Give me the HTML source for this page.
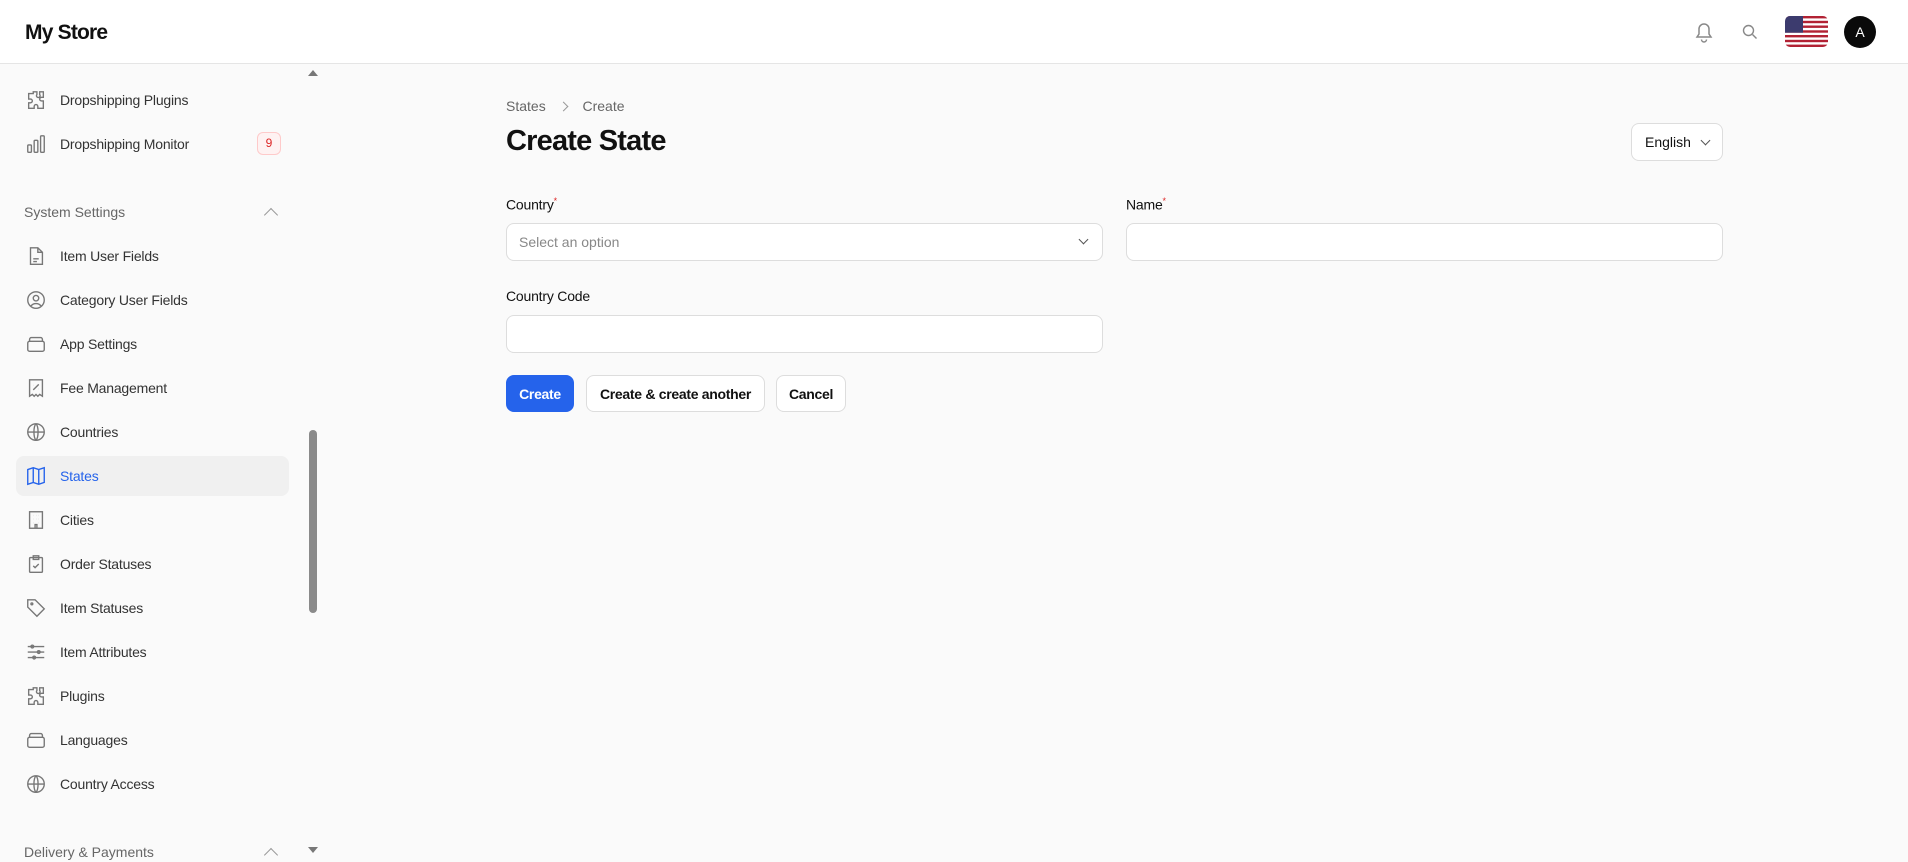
<!DOCTYPE html>
<html><head><meta charset="utf-8"><style>
*{box-sizing:border-box;margin:0;padding:0}
body{width:1908px;height:860px;overflow:hidden;background:#fafafa;font-family:"Liberation Sans",sans-serif;color:#111;position:relative}
.hdr{position:absolute;left:0;top:0;width:1908px;height:64px;background:#fff;border-bottom:1px solid #e5e5e5}
.logo{position:absolute;left:25px;top:21px;font-size:21px;font-weight:bold;letter-spacing:-0.8px}
.side{position:absolute;left:0;top:64px;width:305px;height:796px;background:#fafafa}
.track{position:absolute;left:305px;top:64px;width:15px;height:796px;background:#fafafa}
.thumb{position:absolute;left:309px;top:430px;width:8px;height:183px;background:#8a8a8a;border-radius:4px}
.item{position:absolute;left:16px;width:273px;height:40px;display:flex;align-items:center;font-size:14px;color:#333;border-radius:8px;letter-spacing:-0.2px}
.item svg{margin-left:9px;margin-right:13px;width:22px;height:22px;fill:none;stroke:#777;stroke-width:1.5}
.item.act{background:#f0f0f0;color:#2563eb}
.item.act svg{stroke:#2563eb}
.sec{position:absolute;left:24px;font-size:14px;color:#666}
.caret{position:absolute;left:266px;width:10px;height:10px;border-left:1.5px solid #999;border-top:1.5px solid #999;transform:rotate(45deg)}
.badge{position:absolute;left:257px;top:132px;width:24px;height:23px;border:1px solid #fecaca;background:#fef2f2;border-radius:6px;color:#dc2626;font-size:12px;text-align:center;line-height:21px}
.lbl{position:absolute;font-size:14px;color:#111;letter-spacing:-0.2px}
.lbl sup{color:#dc2626;font-size:9px}
.inp{position:absolute;height:38px;background:#fff;border:1px solid #ddd;border-radius:8px}
.btn{position:absolute;top:375px;height:37px;border-radius:8px;font-size:14px;font-weight:bold;display:flex;align-items:center;justify-content:center;background:#fff;border:1px solid #ddd;letter-spacing:-0.3px}
</style></head><body>
<div class="hdr"><div class="logo">My Store</div>
<svg style="position:absolute;left:1693px;top:20px" width="22" height="24" viewBox="0 0 22 24" fill="none" stroke="#888" stroke-width="1.5"><path d="M4 17h14l-2-3V9a5 5 0 0 0-10 0v5z"/><path d="M8.5 19.5a2.5 2.5 0 0 0 5 0"/></svg>
<svg style="position:absolute;left:1742px;top:24px" width="16" height="16" viewBox="0 0 16 16" fill="none" stroke="#888" stroke-width="1.4"><circle cx="6.5" cy="6.5" r="5"/><path d="M10.5 10.5l4 4"/></svg>
<svg style="position:absolute;left:1785px;top:16px;border-radius:5px" width="43" height="31" viewBox="0 0 43 31"><rect width="43" height="31" fill="#fff"/><g fill="#b22234"><rect y="0" width="43" height="2.4"/><rect y="4.8" width="43" height="2.4"/><rect y="9.5" width="43" height="2.4"/><rect y="14.3" width="43" height="2.4"/><rect y="19" width="43" height="2.4"/><rect y="23.8" width="43" height="2.4"/><rect y="28.6" width="43" height="2.4"/></g><rect width="18" height="16.7" fill="#3c3b6e"/></svg>
<div style="position:absolute;left:1844px;top:16px;width:32px;height:32px;border-radius:50%;background:#0a0a0a;color:#fff;font-size:14px;text-align:center;line-height:32px">A</div>
</div>
<div class="side"></div>
<div class="track"></div><div class="thumb"></div>
<div style="position:absolute;left:308px;top:70px;border-left:5px solid transparent;border-right:5px solid transparent;border-bottom:6px solid #777"></div>
<div style="position:absolute;left:308px;top:847px;border-left:5px solid transparent;border-right:5px solid transparent;border-top:6px solid #777"></div>

<div class="item" style="top:80px"><svg viewBox="0 0 24 24"><path d="M9 3h4v3a2 2 0 1 0 3 0V3h4v6h-2a2 2 0 1 0 0 4h2v8h-6v-2a2 2 0 1 0-4 0v2H4v-6h2a2 2 0 1 0 0-4H4V5h5z"/></svg>Dropshipping Plugins</div>
<div class="item" style="top:124px"><svg viewBox="0 0 24 24"><rect x="3" y="13" width="4" height="8" rx="1"/><rect x="10" y="8" width="4" height="13" rx="1"/><rect x="17" y="3" width="4" height="18" rx="1"/></svg>Dropshipping Monitor</div>
<div class="badge">9</div>
<div class="sec" style="top:204px">System Settings</div><div class="caret" style="top:210px"></div>
<div class="item" style="top:236px"><svg viewBox="0 0 24 24"><path d="M6 3h8l5 5v13H6z"/><path d="M14 3v5h5M9 15h6M9 18h4"/></svg>Item User Fields</div>
<div class="item" style="top:280px"><svg viewBox="0 0 24 24"><circle cx="12" cy="12" r="9"/><circle cx="12" cy="10" r="3"/><path d="M6.5 18.5a7 7 0 0 1 11 0"/></svg>Category User Fields</div>
<div class="item" style="top:324px"><svg viewBox="0 0 24 24"><rect x="3" y="9" width="18" height="11" rx="2"/><path d="M5 9V7a2 2 0 0 1 2-2h10a2 2 0 0 1 2 2v2"/></svg>App Settings</div>
<div class="item" style="top:368px"><svg viewBox="0 0 24 24"><path d="M5 3h14v18l-3-2-2 2-2-2-2 2-2-2-3 2z"/><path d="M9 14l6-6M9 9h.1M15 13h.1"/></svg>Fee Management</div>
<div class="item" style="top:412px"><svg viewBox="0 0 24 24"><circle cx="12" cy="12" r="9"/><path d="M3 12h18M12 3c3 3 3 15 0 18M12 3c-3 3-3 15 0 18"/></svg>Countries</div>
<div class="item act" style="top:456px"><svg viewBox="0 0 24 24"><path d="M3 5l6-2 6 2 6-2v16l-6 2-6-2-6 2z"/><path d="M9 3v16M15 5v16"/></svg>States</div>
<div class="item" style="top:500px"><svg viewBox="0 0 24 24"><rect x="5" y="3" width="14" height="18"/><path d="M9 7h.1M12 7h.1M15 7h.1M9 11h.1M12 11h.1M15 11h.1M9 15h.1M15 15h.1M11 21v-4h2v4"/></svg>Cities</div>
<div class="item" style="top:544px"><svg viewBox="0 0 24 24"><rect x="5" y="5" width="14" height="16" rx="1"/><path d="M9 3h6v4H9zM9 14l2 2 4-4"/></svg>Order Statuses</div>
<div class="item" style="top:588px"><svg viewBox="0 0 24 24"><path d="M3 3h8l10 10-8 8L3 11z"/><circle cx="7.5" cy="7.5" r="1"/></svg>Item Statuses</div>
<div class="item" style="top:632px"><svg viewBox="0 0 24 24"><path d="M3 6h18M3 12h18M3 18h18"/><circle cx="8" cy="6" r="1.5"/><circle cx="15" cy="12" r="1.5"/><circle cx="10" cy="18" r="1.5"/></svg>Item Attributes</div>
<div class="item" style="top:676px"><svg viewBox="0 0 24 24"><path d="M9 3h4v3a2 2 0 1 0 3 0V3h4v6h-2a2 2 0 1 0 0 4h2v8h-6v-2a2 2 0 1 0-4 0v2H4v-6h2a2 2 0 1 0 0-4H4V5h5z"/></svg>Plugins</div>
<div class="item" style="top:720px"><svg viewBox="0 0 24 24"><rect x="3" y="9" width="18" height="11" rx="2"/><path d="M5 9V7a2 2 0 0 1 2-2h10a2 2 0 0 1 2 2v2"/></svg>Languages</div>
<div class="item" style="top:764px"><svg viewBox="0 0 24 24"><circle cx="12" cy="12" r="9"/><path d="M3 12h18M12 3c3 3 3 15 0 18M12 3c-3 3-3 15 0 18"/></svg>Country Access</div>
<div class="sec" style="top:844px">Delivery &amp; Payments</div><div class="caret" style="top:850px"></div>

<div style="position:absolute;left:506px;top:98px;font-size:14px;color:#666">States <span style="display:inline-block;width:7px;height:7px;border-right:1.3px solid #999;border-top:1.3px solid #999;transform:rotate(45deg);margin:0 12px 1px 10px"></span> Create</div>
<div style="position:absolute;left:506px;top:125px;font-size:29px;font-weight:bold;letter-spacing:-0.8px">Create State</div>
<div style="position:absolute;left:1631px;top:123px;width:92px;height:38px;background:#fff;border:1px solid #ddd;border-radius:8px;font-size:14px;line-height:36px;padding-left:13px">English <span style="display:inline-block;width:7px;height:7px;border-right:1.5px solid #555;border-bottom:1.5px solid #555;transform:rotate(45deg);margin-left:7px;position:relative;top:-3px"></span></div>
<div class="lbl" style="left:506px;top:196px">Country<sup>*</sup></div>
<div class="lbl" style="left:1126px;top:196px">Name<sup>*</sup></div>
<div class="inp" style="left:506px;top:223px;width:597px;font-size:14px;color:#888;line-height:36px;padding-left:12px">Select an option<span style="position:absolute;right:15px;top:12px;width:7px;height:7px;border-right:1.5px solid #555;border-bottom:1.5px solid #555;transform:rotate(45deg)"></span></div>
<div class="inp" style="left:1126px;top:223px;width:597px"></div>
<div class="lbl" style="left:506px;top:288px">Country Code</div>
<div class="inp" style="left:506px;top:315px;width:597px"></div>
<div class="btn" style="left:506px;width:68px;background:#2563eb;border-color:#2563eb;color:#fff">Create</div>
<div class="btn" style="left:586px;width:179px">Create &amp; create another</div>
<div class="btn" style="left:776px;width:70px">Cancel</div>
</body></html>
